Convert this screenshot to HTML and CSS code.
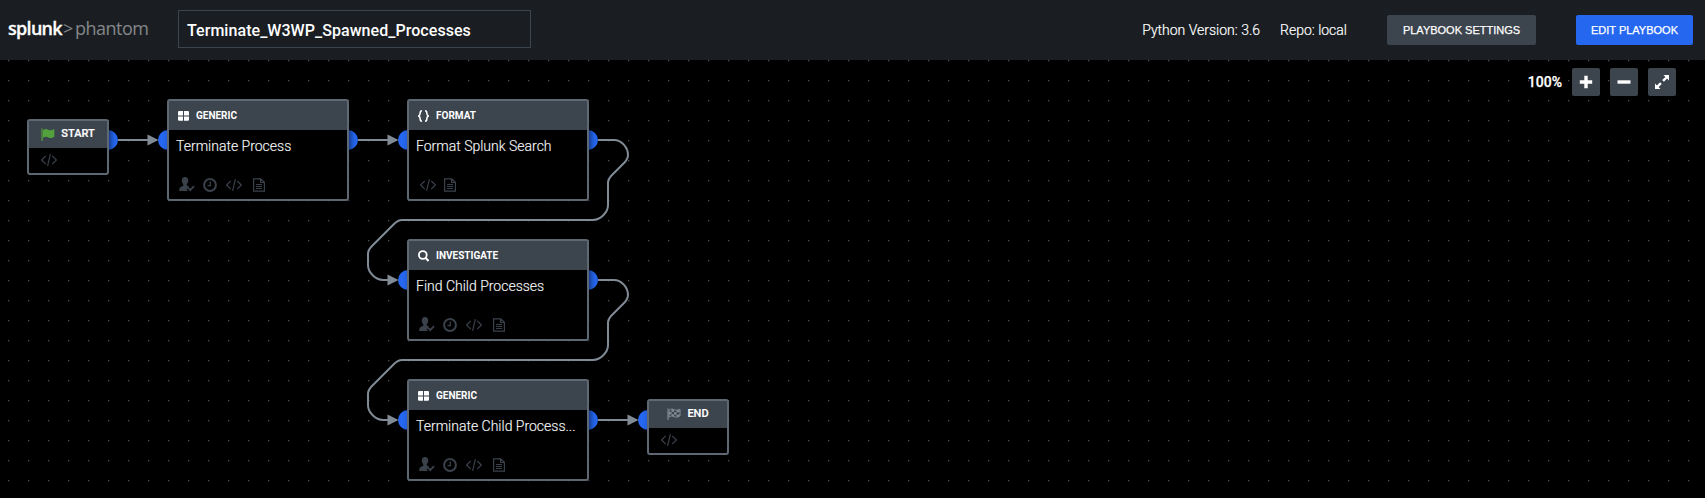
FILE: index.html
```html
<!DOCTYPE html>
<html lang="en">
<head>
<meta charset="utf-8">
<title>Terminate_W3WP_Spawned_Processes</title>
<link rel="stylesheet" href="styles.css">
</head>
<body>
<svg class="defs" width="0" height="0" aria-hidden="true">
  <symbol id="code" viewBox="0 0 16 14"><path d="M4.800 2.800.6 7l4.200 4.200M11.200 2.800 15.400 7l-4.200 4.200M9.400 1.200 6.600 12.800" fill="none" stroke="currentColor" stroke-width="1.200"/></symbol>
  <symbol id="user" viewBox="0 0 16 15"><path fill="currentColor" d="M6 0c2 0 3.200 1.300 3.200 3.400 0 1.800-.6 3-1.400 3.700v1.500l2 1L11 11l1 3H.2c0-2.600.6-3.700 2-4.200l2-1V7.100C3.400 6.400 2.800 5.200 2.800 3.400 2.800 1.300 4 0 6 0z"/><path d="m9 11 2.200 2.300L15 9.300" fill="none" stroke="#000" stroke-width="4"/><path d="m9 10.900 2.200 2.200L15 9.200" fill="none" stroke="currentColor" stroke-width="1.900"/></symbol>
  <symbol id="clock" viewBox="0 0 14 14"><circle cx="7" cy="7" r="5.900" fill="none" stroke="currentColor" stroke-width="2"/><path d="M7.300 3.600v4H4.500" fill="none" stroke="currentColor" stroke-width="1.300"/></symbol>
  <symbol id="doc" viewBox="0 0 12 14"><path d="M.6.8h7.200l3.600 3.500v8.900H.6zM7.600.8v3.700h3.800M3 6.500h6M3 8.500h6M3 10.500h6" fill="none" stroke="currentColor" stroke-width="1.200"/></symbol>
  <symbol id="grid" viewBox="0 0 11 10"><path fill="currentColor" d="M.8 0H5v4.400H0V.8zM6 0h4.200l.8.800v3.600H6zM0 5.400h5v4.400H.8L0 9zM6 5.400h5V9l-.8.800H6z"/></symbol>
</svg>

<header class="topbar">
  <div class="logo"><b>splunk</b><span class="caret">&gt;</span><span class="product">phantom</span></div>
  <div class="title">Terminate_W3WP_Spawned_Processes</div>
  <div class="meta"><span>Python Version: 3.6</span><span>Repo: local</span></div>
  <button class="btn">PLAYBOOK SETTINGS</button>
  <button class="btn primary">EDIT PLAYBOOK</button>
</header>

<main class="canvas">
  <svg class="wires" width="1705" height="438" viewBox="0 60 1705 438">
    <g class="line">
      <path d="M118 140h35M358 140h35M598 420h35"/>
      <path d="M598 140h16c7.500 0 14 7.500 14 15 0 3-2 6-4 8l-12 12c-2 2-4 5-4 8v22c0 7.500-7.500 15-15 15H402c-3 0-6 2-8 4l-22 22c-2 2-4 5-4 8v11c0 7.500 7.500 15 15 15h10"/>
      <path d="M598 280h16c7.500 0 14 7.500 14 15 0 3-2 6-4 8l-12 12c-2 2-4 5-4 8v22c0 7.500-7.500 15-15 15H402c-3 0-6 2-8 4l-22 22c-2 2-4 5-4 8v11c0 7.500 7.500 15 15 15h10"/>
    </g>
    <path class="head" d="M147.500 134.500v11l11-5.500zM387.500 134.500v11l11-5.500zM387.500 274.500v11l11-5.500zM387.500 414.500v11l11-5.500zM627.500 414.500v11l11-5.500z"/>
    <g class="port">
      <circle cx="108" cy="140" r="10"/><circle cx="168" cy="140" r="10"/>
      <circle cx="348" cy="140" r="10"/><circle cx="408" cy="140" r="10"/>
      <circle cx="588" cy="140" r="10"/><circle cx="408" cy="280" r="10"/>
      <circle cx="588" cy="280" r="10"/><circle cx="408" cy="420" r="10"/>
      <circle cx="588" cy="420" r="10"/><circle cx="648" cy="420" r="10"/>
    </g>
  </svg>

  <section class="node small start">
    <h2><svg class="flag green" width="14" height="13" viewBox="0 0 14 13"><path d="M1 .5V13" stroke="currentColor" stroke-width="1.200"/><path fill="currentColor" d="M2 2.200c2-1.600 3.600-1.300 5.300-.5 2 .9 3.400.6 6-.8v7.800c-2.500 1.400-4 1.600-6 .7-1.700-.8-3.300-.8-5.300.6z"/></svg>START</h2>
    <div class="tools"><svg width="16" height="14"><use href="#code"/></svg></div>
  </section>

  <section class="node n1">
    <h2><svg width="11" height="10"><use href="#grid"/></svg>GENERIC</h2>
    <p>Terminate Process</p>
    <div class="tools"><svg width="16" height="15"><use href="#user"/></svg><svg width="14" height="14"><use href="#clock"/></svg><svg width="16" height="14"><use href="#code"/></svg><svg width="12" height="14"><use href="#doc"/></svg></div>
  </section>

  <section class="node n2">
    <h2><svg width="11" height="12" viewBox="0 0 11 12"><path d="M4 .8C2.200.8 2.200 1.500 2.200 3s0 2.500-1.700 3c1.700.5 1.700 1.500 1.700 3s0 2.200 1.800 2.200M7 .8C8.800.8 8.800 1.500 8.800 3s0 2.500 1.700 3c-1.700.5-1.700 1.500-1.700 3s0 2.200-1.800 2.200" fill="none" stroke="currentColor" stroke-width="1.600"/></svg>FORMAT</h2>
    <p>Format Splunk Search</p>
    <div class="tools pair"><svg width="16" height="14"><use href="#code"/></svg><svg width="12" height="14"><use href="#doc"/></svg></div>
  </section>

  <section class="node n3">
    <h2><svg width="11" height="12" viewBox="0 0 11 12"><circle cx="4.800" cy="5" r="3.900" fill="none" stroke="currentColor" stroke-width="1.800"/><path d="m7.500 7.800 3 3.200" stroke="currentColor" stroke-width="2"/></svg>INVESTIGATE</h2>
    <p>Find Child Processes</p>
    <div class="tools"><svg width="16" height="15"><use href="#user"/></svg><svg width="14" height="14"><use href="#clock"/></svg><svg width="16" height="14"><use href="#code"/></svg><svg width="12" height="14"><use href="#doc"/></svg></div>
  </section>

  <section class="node n4">
    <h2><svg width="11" height="10"><use href="#grid"/></svg>GENERIC</h2>
    <p>Terminate Child Process...</p>
    <div class="tools"><svg width="16" height="15"><use href="#user"/></svg><svg width="14" height="14"><use href="#clock"/></svg><svg width="16" height="14"><use href="#code"/></svg><svg width="12" height="14"><use href="#doc"/></svg></div>
  </section>

  <section class="node small end">
    <h2><svg class="flag gray" width="14" height="13" viewBox="0 0 14 13"><path d="M1 .5V12" stroke="currentColor" stroke-width="1.200"/><path fill="none" stroke="currentColor" d="M2 2.200c2-1.600 3.600-1.300 5.300-.5 2 .9 3.400.6 5.700-.6v6.800c-2.500 1.400-4 1.600-6 .7-1.700-.8-3 -.8-5 .6z"/><path fill="currentColor" d="M4.500 1.200 7 1.700v2.400l-2.500-.5zM9.500 2.400l3-1v2.500l-3 .7zM2 4.200l2.500-.6V6L2 6.700zM7 4.100l2.500.5V7L7 6.500zM4.500 6 7 6.500v2.200L4.500 8zM9.500 7l3-.7v2l-3 .8z"/></svg>END</h2>
    <div class="tools"><svg width="16" height="14"><use href="#code"/></svg></div>
  </section>

  <div class="zoom">
    <span>100%</span>
    <button><svg width="14" height="14"><path d="M7 .8v12.400M.8 7h12.400" stroke="#fff" stroke-width="3.400"/></svg></button>
    <button><svg width="14" height="14"><path d="M.5 7h13" stroke="#fff" stroke-width="3.400"/></svg></button>
    <button><svg width="14" height="14"><path fill="#fff" d="M8.500 0H14v5.500l-1.900-1.900-3.200 3.200-1.700-1.700 3.200-3.200zM0 8.500l1.900 1.900 3.200-3.200 1.700 1.700-3.200 3.200L5.500 14H0z"/></svg></button>
  </div>
</main>
</body>
</html>
```
FILE: styles.css
```css
* { box-sizing: border-box; }
body {
  margin: 0;
  height: 498px;
  overflow: hidden;
  background: #000;
  color: #fff;
  font-family: Roboto, sans-serif;
}
.defs { position: absolute; }
button { border: 0; padding: 0; color: #fff; font-family: inherit; border-radius: 2px; background: #3c444d; }

.topbar {
  display: flex;
  align-items: center;
  height: 60px;
  padding: 0 12px 0 8px;
  background: #1a1e22;
}
.logo {
  display: flex;
  align-items: baseline;
  width: 170px;
  margin-top: -5px;
  font: 18px "Open Sans", sans-serif;
  white-space: nowrap;
}
.logo b { width: 55px; font-weight: 600; letter-spacing: -.7px; -webkit-text-stroke: .3px #fff; }
.caret { width: 12px; color: #85878a; font-weight: 400; }
.product { color: #85878a; font-weight: 400; letter-spacing: -.5px; }
.title {
  width: 353px;
  height: 38px;
  margin-top: -2px;
  padding-left: 8px;
  border: 1px solid #3c444d;
  font-size: 16px;
  font-weight: 500;
  letter-spacing: .05px;
  line-height: 39px;
}
.meta { display: flex; gap: 20px; margin: 0 40px 0 auto; font-size: 14px; font-weight: 300; -webkit-text-stroke: .2px #fff; }
.btn { width: 149px; height: 30px; font: 11px "Liberation Sans", Arial, sans-serif; -webkit-text-stroke: .25px #fff; }
.btn.primary { width: 117px; margin-left: 40px; background: #2667f0; }

.canvas {
  position: relative;
  height: 438px;
  background: radial-gradient(circle at 8.700px .7px, #484c50 0, #484c50 .4px, transparent 1.100px) 0 0 / 20px 20px;
}
.wires { position: absolute; inset: 0; }
.line { fill: none; stroke: #818b96; stroke-width: 2; }
.head { fill: #818b96; }
.port { fill: #2667f0; }

.node {
  position: absolute;
  width: 182px;
  height: 102px;
  border: 2px solid #5d6872;
  border-radius: 3px;
  background: #000;
  box-shadow: 2px 0 5px rgba(0, 0, 0, .5);
}
.node h2 {
  display: flex;
  align-items: center;
  gap: 7px;
  height: 29px;
  margin: 0;
  padding-left: 9px;
  background: #3c444d;
  font-size: 10px;
  font-weight: 700;
}
.node p { margin: 6px 0 0 7px; font-size: 14px; font-weight: 300; line-height: 20px; color: #f4f6f8; -webkit-text-stroke: .15px #f4f6f8; }
.tools { display: flex; align-items: center; gap: 9px; margin: 21px 0 0 9.500px; height: 15px; color: #3a414b; }
.tools svg:nth-child(2) { margin-left: -1px; }
.tools svg:nth-child(3) { margin-left: .5px; }
.tools svg:nth-child(4) { margin-left: 1.500px; }
.tools.pair { gap: 9px; margin-left: 10.500px; }
.node.small { width: 82px; height: 56px; }
.small h2 { height: 27px; justify-content: center; gap: 6px; padding: 0 0 2px 0; font-size: 11px; font-weight: 500; -webkit-text-stroke: .2px #fff; }
.small .tools { margin: 4px 0 0 12px; }
.small .flag { margin-top: 2px; }
.green { color: #53a13c; }
.gray { color: #818b96; }
.start { left: 27px; top: 59px; }
.n1 { left: 167px; top: 39px; }
.n2 { left: 407px; top: 39px; }
.n3 { left: 407px; top: 179px; }
.n4 { left: 407px; top: 319px; }
.end { left: 647px; top: 339px; }

.zoom { position: absolute; top: 8px; right: 29px; display: flex; align-items: center; gap: 10px; font-size: 14px; font-weight: 500; }
.zoom span { -webkit-text-stroke: .25px #fff; }
.zoom button { display: grid; place-items: center; width: 28px; height: 28px; }
```
